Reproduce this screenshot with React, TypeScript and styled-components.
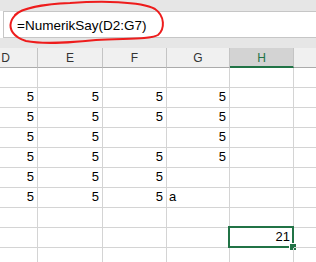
import { createGlobalStyle, styled } from 'styled-components';

const GlobalStyle = createGlobalStyle`
  html, body {
    margin: 0;
    padding: 0;
    background: #ffffff;
  }
  body {
    font-family: "Liberation Sans", Arial, sans-serif;
    width: 316px;
    height: 262px;
    overflow: hidden;
  }
`;

// the I column is scrolled mostly out of view, its letter falls past the edge
const COLUMNS = [
  { name: 'D', width: 64 },
  { name: 'E', width: 65 },
  { name: 'F', width: 64 },
  { name: 'G', width: 63 },
  { name: 'H', width: 64 },
  { name: '', width: 64 },
];

const ACTIVE_COL = 4;
const ACTIVE_ROW = 8;

const DATA: string[][] = [
  [],
  ['5', '5', '5', '5'],
  ['5', '5', '5', '5'],
  ['5', '5', '', '5'],
  ['5', '5', '5', '5'],
  ['5', '5', '5', ''],
  ['5', '5', '5', 'a'],
  [],
  ['', '', '', '', '21'],
  [],
];

const Window = styled.div`
  position: relative;
  width: 316px;
  height: 262px;
  overflow: hidden;
  background: #ffffff;
`;

const TopBand = styled.div`
  height: 11px;
  background: #e6e6e6;
`;

const FormulaBar = styled.div`
  height: 23px;
  margin-left: 3px;
  border-top: 1px solid #c6c6c6;
  border-bottom: 1px solid #c6c6c6;
  border-left: 1px solid #c6c6c6;
  background: #ffffff;
  display: flex;
  align-items: center;
  padding-left: 13px;
  font-size: 13.5px;
  color: #000;
  padding-top: 2px;
  box-sizing: content-box;
`;

const Gap = styled.div`
  height: 10px;
  background: #e6e6e6;
`;

const Sheet = styled.div`
  overflow: hidden;
`;

const Grid = styled.div`
  margin-left: -26px;
  display: flex;
  flex-direction: column;
`;

const HeaderRow = styled.div`
  display: flex;
  height: 20px;
  background: #f0f0f0;
`;

const HeaderCell = styled.div<{ $w: number; $active?: boolean }>`
  flex: 0 0 ${(p) => p.$w}px;
  box-sizing: border-box;
  border-right: 1px solid #c4c4c4;
  border-bottom: ${(p) => (p.$active ? '2px solid #217346' : '1px solid #ababab')};
  background: ${(p) => (p.$active ? '#d3d3d3' : 'transparent')};
  color: ${(p) => (p.$active ? '#217346' : '#333')};
  font-size: 12px;
  display: flex;
  align-items: center;
  justify-content: center;
  padding-top: ${(p) => (p.$active ? '2px' : '1px')};
`;

const Row = styled.div`
  display: flex;
  height: 20px;
`;

const Cell = styled.div<{ $w: number; $left?: boolean }>`
  position: relative;
  flex: 0 0 ${(p) => p.$w}px;
  box-sizing: border-box;
  border-right: 1px solid #d4d4d4;
  border-bottom: 1px solid #d4d4d4;
  font-size: 13px;
  color: #000;
  display: flex;
  align-items: flex-end;
  justify-content: ${(p) => (p.$left ? 'flex-start' : 'flex-end')};
  padding: 0 3px 2px 2px;
  line-height: 16px;
`;

const Selection = styled.div`
  position: absolute;
  top: -2px;
  left: -2px;
  right: -1px;
  bottom: -1px;
  border: 2px solid #217346;
  pointer-events: none;
`;

const FillHandle = styled.div`
  position: absolute;
  right: -5px;
  bottom: -5px;
  width: 6px;
  height: 6px;
  background: #217346;
  border: 1px solid #ffffff;
`;

const Annotation = styled.svg`
  position: absolute;
  left: 0;
  top: 0;
  pointer-events: none;
`;

export default function App() {
  return (
    <>
      <GlobalStyle />
      <Window>
        <TopBand />
        <FormulaBar>=NumerikSay(D2:G7)</FormulaBar>
        <Gap />
        <Sheet>
          <Grid>
            <HeaderRow>
              {COLUMNS.map((c, i) => (
                <HeaderCell key={i} $w={c.width} $active={i === ACTIVE_COL}>
                  {c.name}
                </HeaderCell>
              ))}
            </HeaderRow>
            {DATA.map((row, r) => (
              <Row key={r}>
                {COLUMNS.map((c, i) => {
                  const v = row[i] ?? '';
                  const isText = v !== '' && isNaN(Number(v));
                  const active = r === ACTIVE_ROW && i === ACTIVE_COL;
                  return (
                    <Cell key={i} $w={c.width} $left={isText}>
                      {v}
                      {active && (
                        <Selection>
                          <FillHandle />
                        </Selection>
                      )}
                    </Cell>
                  );
                })}
              </Row>
            ))}
          </Grid>
        </Sheet>
        <Annotation width="172" height="48" viewBox="0 0 172 48">
          <path
            d="M15,15 C22,8 45,4 70,3 C100,1 140,1 155,9 C165,16 165,29 158,35 C149,40 122,38 96,40 C76,42 46,45 26,41 C13,37 9,29 11,22 C12,18 14,16 18,13"
            fill="none"
            stroke="#ee1c1c"
            strokeWidth="2"
            strokeLinecap="round"
          />
        </Annotation>
      </Window>
    </>
  );
}
